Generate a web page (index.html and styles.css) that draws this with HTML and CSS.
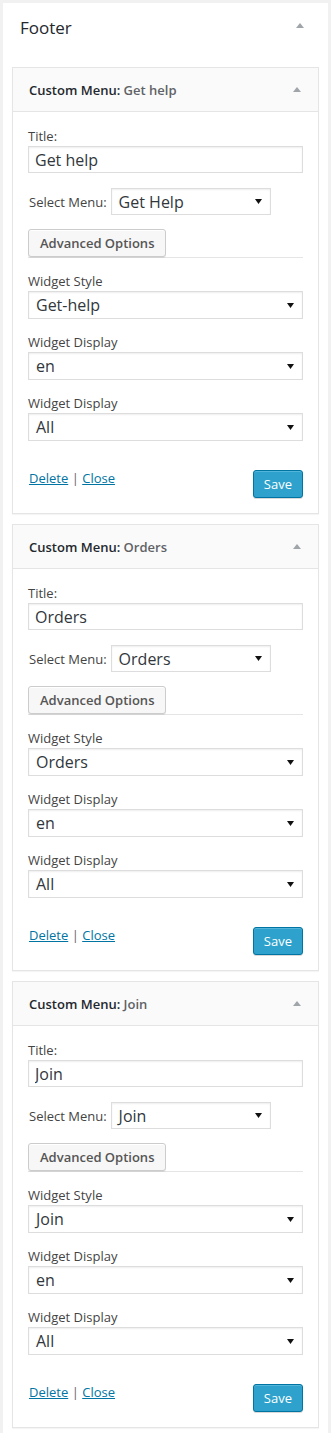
FILE: index.html
```html
<!DOCTYPE html>
<html>
<head>
<meta charset="utf-8">
<link rel="stylesheet" href="styles.css">
</head>
<body>
<div class="panel">
  <div class="panel-head">
    <h2 class="panel-title">Footer</h2>
    <svg class="toggle" width="8" height="5" viewBox="0 0 8 5"><polygon points="0,5 4,0 8,5" fill="#a0a5aa"/></svg>
  </div>

  <div class="widget">
    <div class="widget-head">
      <h3 class="widget-title">Custom Menu: <span class="in-title">Get help</span></h3>
      <svg class="toggle" width="8" height="5" viewBox="0 0 8 5"><polygon points="0,5 4,0 8,5" fill="#a0a5aa"/></svg>
    </div>
    <div class="widget-body">
      <label class="lbl">Title:</label>
      <input class="text" type="text" value="Get help">
      <div class="menu-row">
        <span class="menu-lbl">Select Menu:</span>
        <div class="select small"><span>Get Help</span><svg width="7" height="5" viewBox="0 0 7 5"><polygon points="0,0 7,0 3.5,5" fill="#111"/></svg></div>
      </div>
      <div class="adv-row"><button class="btn">Advanced Options</button></div>
      <div class="group">
        <label class="lbl">Widget Style</label>
        <div class="select"><span>Get-help</span><svg width="7" height="5" viewBox="0 0 7 5"><polygon points="0,0 7,0 3.5,5" fill="#111"/></svg></div>
      </div>
      <div class="group">
        <label class="lbl">Widget Display</label>
        <div class="select"><span>en</span><svg width="7" height="5" viewBox="0 0 7 5"><polygon points="0,0 7,0 3.5,5" fill="#111"/></svg></div>
      </div>
      <div class="group">
        <label class="lbl">Widget Display</label>
        <div class="select"><span>All</span><svg width="7" height="5" viewBox="0 0 7 5"><polygon points="0,0 7,0 3.5,5" fill="#111"/></svg></div>
      </div>
      <div class="actions">
        <div class="links"><a href="#">Delete</a> <span class="sep">|</span> <a href="#">Close</a></div>
        <button class="save">Save</button>
      </div>
    </div>
  </div>

  <div class="widget">
    <div class="widget-head">
      <h3 class="widget-title">Custom Menu: <span class="in-title">Orders</span></h3>
      <svg class="toggle" width="8" height="5" viewBox="0 0 8 5"><polygon points="0,5 4,0 8,5" fill="#a0a5aa"/></svg>
    </div>
    <div class="widget-body">
      <label class="lbl">Title:</label>
      <input class="text" type="text" value="Orders">
      <div class="menu-row">
        <span class="menu-lbl">Select Menu:</span>
        <div class="select small"><span>Orders</span><svg width="7" height="5" viewBox="0 0 7 5"><polygon points="0,0 7,0 3.5,5" fill="#111"/></svg></div>
      </div>
      <div class="adv-row"><button class="btn">Advanced Options</button></div>
      <div class="group">
        <label class="lbl">Widget Style</label>
        <div class="select"><span>Orders</span><svg width="7" height="5" viewBox="0 0 7 5"><polygon points="0,0 7,0 3.5,5" fill="#111"/></svg></div>
      </div>
      <div class="group">
        <label class="lbl">Widget Display</label>
        <div class="select"><span>en</span><svg width="7" height="5" viewBox="0 0 7 5"><polygon points="0,0 7,0 3.5,5" fill="#111"/></svg></div>
      </div>
      <div class="group">
        <label class="lbl">Widget Display</label>
        <div class="select"><span>All</span><svg width="7" height="5" viewBox="0 0 7 5"><polygon points="0,0 7,0 3.5,5" fill="#111"/></svg></div>
      </div>
      <div class="actions">
        <div class="links"><a href="#">Delete</a> <span class="sep">|</span> <a href="#">Close</a></div>
        <button class="save">Save</button>
      </div>
    </div>
  </div>

  <div class="widget">
    <div class="widget-head">
      <h3 class="widget-title">Custom Menu: <span class="in-title">Join</span></h3>
      <svg class="toggle" width="8" height="5" viewBox="0 0 8 5"><polygon points="0,5 4,0 8,5" fill="#a0a5aa"/></svg>
    </div>
    <div class="widget-body">
      <label class="lbl">Title:</label>
      <input class="text" type="text" value="Join">
      <div class="menu-row">
        <span class="menu-lbl">Select Menu:</span>
        <div class="select small"><span>Join</span><svg width="7" height="5" viewBox="0 0 7 5"><polygon points="0,0 7,0 3.5,5" fill="#111"/></svg></div>
      </div>
      <div class="adv-row"><button class="btn">Advanced Options</button></div>
      <div class="group">
        <label class="lbl">Widget Style</label>
        <div class="select"><span>Join</span><svg width="7" height="5" viewBox="0 0 7 5"><polygon points="0,0 7,0 3.5,5" fill="#111"/></svg></div>
      </div>
      <div class="group">
        <label class="lbl">Widget Display</label>
        <div class="select"><span>en</span><svg width="7" height="5" viewBox="0 0 7 5"><polygon points="0,0 7,0 3.5,5" fill="#111"/></svg></div>
      </div>
      <div class="group">
        <label class="lbl">Widget Display</label>
        <div class="select"><span>All</span><svg width="7" height="5" viewBox="0 0 7 5"><polygon points="0,0 7,0 3.5,5" fill="#111"/></svg></div>
      </div>
      <div class="actions">
        <div class="links"><a href="#">Delete</a> <span class="sep">|</span> <a href="#">Close</a></div>
        <button class="save">Save</button>
      </div>
    </div>
  </div>
</div>
</body>
</html>
```

FILE: styles.css
```css
html, body {
  margin: 0;
  padding: 0;
}
body {
  background: #f1f1f1;
  font-family: "Open Sans", "Noto Sans", sans-serif;
  font-size: 13px;
  color: #444;
}
.panel {
  margin: 3px 3px 0 3px;
  background: #fff;
  padding: 0 9px 10px 9px;
}
.panel-head {
  height: 44px;
  display: flex;
  align-items: center;
  justify-content: space-between;
  padding: 0 15px 0 8px;
  margin-bottom: 20px;
}
.panel-title {
  margin: 6px 0 0 0;
  font-size: 17px;
  font-weight: 400;
  color: #23282d;
  line-height: 24px;
}
.toggle {
  display: block;
}
.widget {
  border: 1px solid #e5e5e5;
  background: #fff;
  margin-bottom: 10px;
  box-shadow: 0 1px 1px rgba(0,0,0,0.04);
}
.widget-head {
  height: 43px;
  background: #fafafa;
  border-bottom: 1px solid #e5e5e5;
  display: flex;
  align-items: center;
  justify-content: space-between;
  padding: 0 17px 0 16px;
}
.widget-title {
  margin: 0;
  font-size: 13px;
  font-weight: 600;
  color: #23282d;
  line-height: 18px;
}
.in-title {
  color: #5f6266;
  font-weight: 600;
}
.widget-body {
  padding: 15px 15px 15px 15px;
}
.lbl {
  display: block;
  line-height: 18px;
  color: #444;
  margin-bottom: 1px;
}
.text {
  display: block;
  box-sizing: border-box;
  width: 100%;
  height: 27px;
  margin: 0;
  border: 1px solid #ddd;
  box-shadow: inset 0 1px 2px rgba(0,0,0,0.07);
  padding: 0 6px;
  font-family: "Open Sans", "Noto Sans", sans-serif;
  font-size: 16px;
  color: #32373c;
  outline: none;
}
.menu-row {
  display: flex;
  align-items: center;
  margin-top: 15px;
}
.menu-lbl {
  margin-right: 4px;
  margin-left: 1px;
}
.select {
  box-sizing: border-box;
  height: 28px;
  border: 1px solid #ddd;
  box-shadow: inset 0 1px 2px rgba(0,0,0,0.07);
  background: #fff;
  display: flex;
  align-items: center;
  justify-content: space-between;
  padding: 0 8px 0 7px;
  font-size: 16px;
  color: #32373c;
}
.select.small {
  width: 160px;
  height: 27px;
}
.select svg {
  display: block;
}
.adv-row {
  margin-top: 14px;
  border-bottom: 1px solid #e5e5e5;
  display: flex;
  margin-bottom: 14px;
}
.btn {
  box-sizing: border-box;
  height: 28px;
  padding: 0 11px;
  background: #f7f7f7;
  border: 1px solid #ccc;
  border-radius: 3px;
  box-shadow: inset 0 1px 0 #fff, 0 1px 0 rgba(0,0,0,0.08);
  font-family: "Open Sans", "Noto Sans", sans-serif;
  font-size: 13px;
  font-weight: 600;
  color: #555;
  margin: 0;
}
.group {
  margin-bottom: 14px;
}
.group:last-of-type {
  margin-bottom: 0;
}
.actions {
  margin-top: 28px;
  display: flex;
  justify-content: space-between;
  align-items: flex-start;
}
.links {
  line-height: 18px;
  padding-left: 1px;
}
.links a {
  color: #0074a2;
  text-decoration: underline;
}
.sep {
  color: #666;
}
.save {
  box-sizing: border-box;
  height: 28px;
  margin-top: 1px;
  padding: 0 10px;
  background: #2ea2cc;
  border: 1px solid #0074a2;
  border-radius: 3px;
  box-shadow: inset 0 1px 0 rgba(120,200,230,0.5), 0 1px 0 rgba(0,0,0,0.15);
  color: #fff;
  font-family: "Open Sans", "Noto Sans", sans-serif;
  font-size: 13px;
  font-weight: 400;
}
```
